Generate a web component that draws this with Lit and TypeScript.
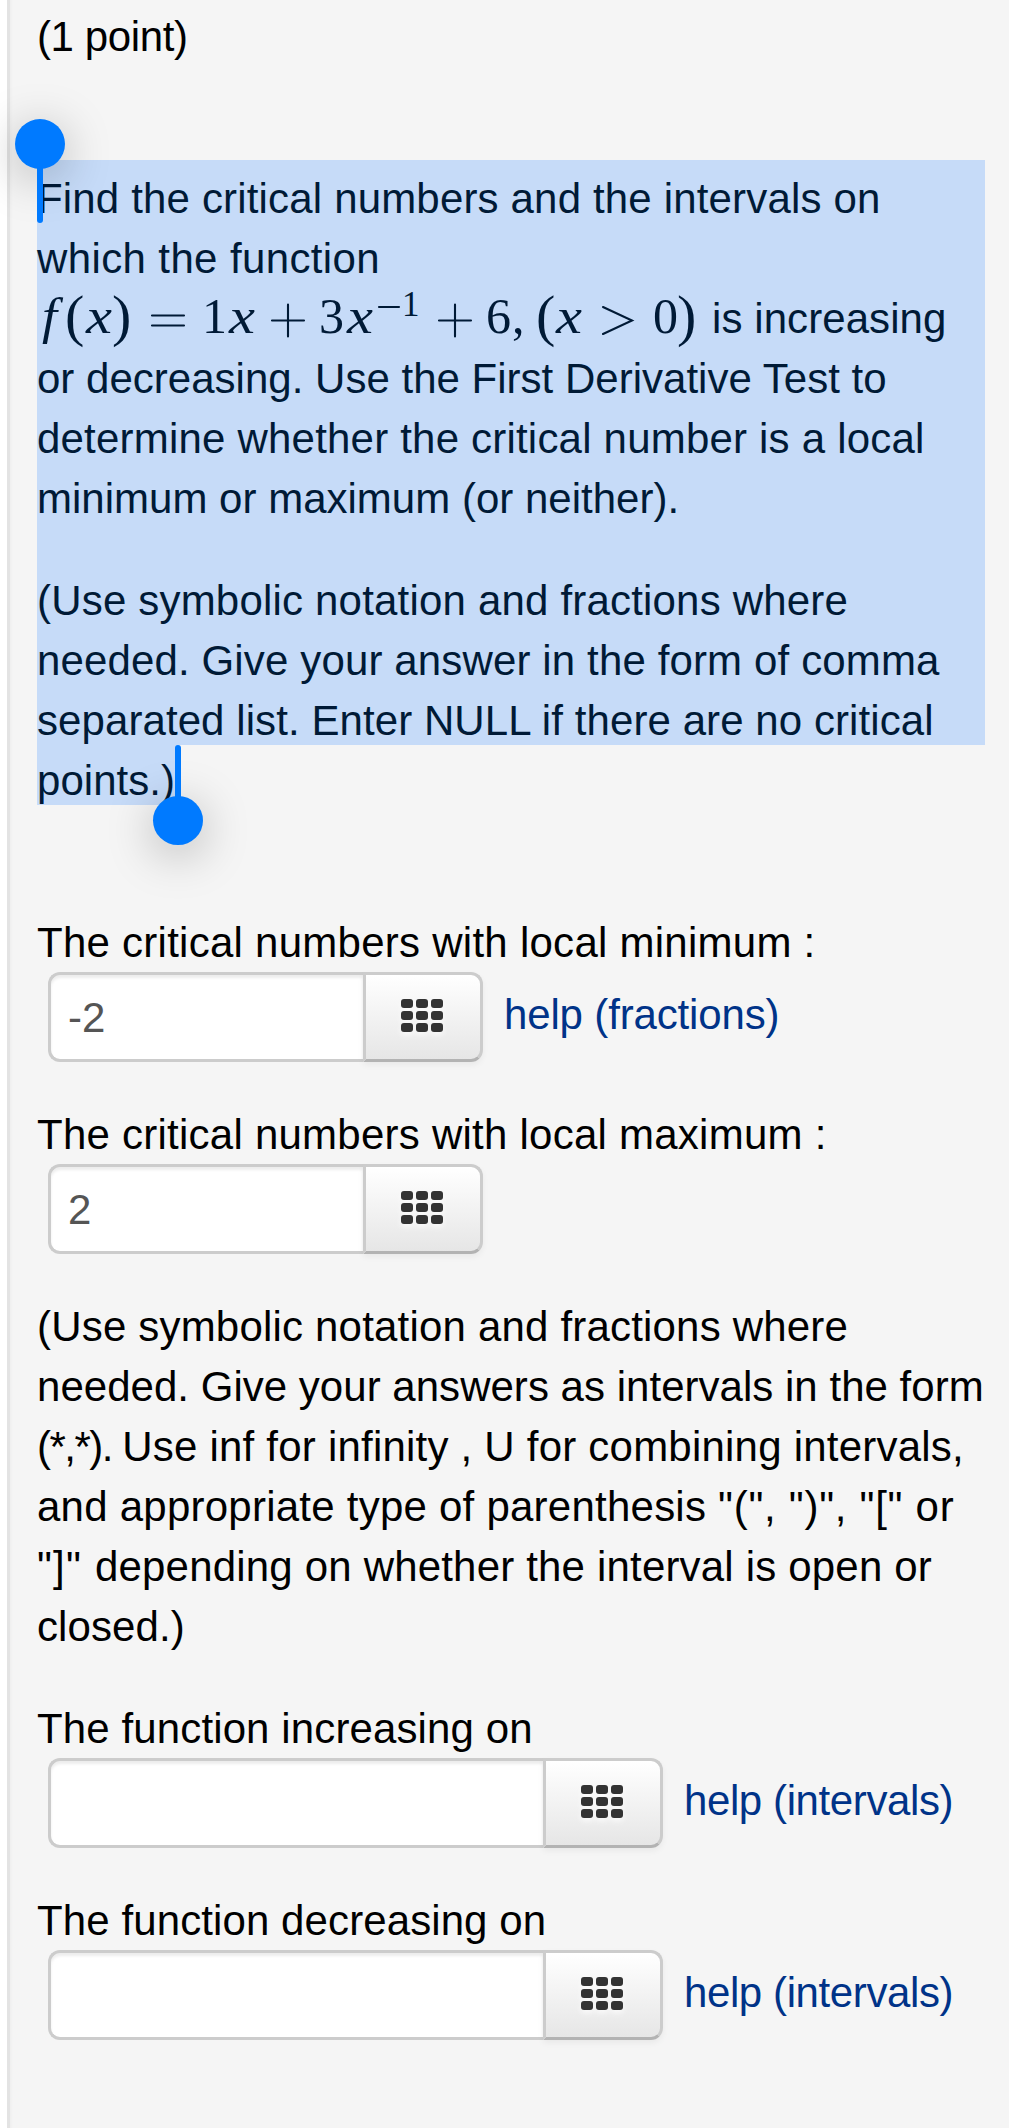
import { LitElement, html, css, svg } from "lit";
import { customElement, property } from "lit/decorators.js";
import { styleMap } from "lit/directives/style-map.js";

/** Runs of one line of text, each followed by its tracking in pixels. */
type Run = [text: string, tracking: number];
type Line = Run[];

const track = (px: number) => styleMap({ letterSpacing: `${px}px` });
const line = (runs: Line) =>
  html`<span class="line">${runs.map(([text, px]) => html`<span style=${track(px)}>${text}</span>`)}</span>`;

const INTRO: Line[] = [
  [["Find the critical numbers and the intervals on", 0.169]],
  [["which the function", 0.38]],
];
const TASK: Line[] = [
  [["or decreasing. Use the First Derivative Test to", 0.015]],
  [["determine whether the critical number is a local", 0.204]],
  [["minimum or maximum (or neither).", 0.01]],
];
const NOTATION: Line[] = [
  [["(Use symbolic notation and fractions where", 0.19]],
  [["needed. Give your answer in the form of comma", 0.135]],
  [["separated list. Enter NULL if there are no critical", 0.08]],
  [["points.)", 0.037]],
];
const INTERVALS: Line[] = [
  [["(Use symbolic notation and fractions where", 0.19]],
  [["needed. Give your answers as intervals in the form", 0.025]],
  [["(*,*). ", -1.5], ["Use inf for infinity , U for combining intervals,", 0.22]],
  [["and appropriate type of parenthesis ", 0.24], ['"(", ")", "[" or', 0.72]],
  [['"]" ', 1.2], ["depending on whether the interval is open or", 0.185]],
  [["closed.)", 0.1]],
];

@customElement("math-formula")
class MathFormula extends LitElement {
  static styles = css`
    :host { display: block; width: 675px; height: 60px; flex: none; }
    svg { display: block; overflow: visible; }
    text { font-family: "Liberation Serif", serif; font-size: 50px; fill: #001a36; }
    .it { font-style: italic; }
    .par { font-size: 58px; }
    .sup { font-size: 35px; }
    .op { fill: none; stroke: #001a36; stroke-width: 2.1; stroke-linecap: round; }
  `;
  render() {
    const t = (s: string, x: number, cls = "", y = 45) => svg`<text class=${cls} x=${x} y=${y}>${s}</text>`;
    const wide = (s: string, x: number, w: number) =>
      svg`<text class="it" x=${x} y="45" textLength=${w} lengthAdjust="spacingAndGlyphs">${s}</text>`;
    return html`<svg width="675" height="60" viewBox="37 0 675 60" role="img" aria-label="f(x) = 1x + 3x^-1 + 6, (x > 0)">
      ${wide("f", 42, 15)}${t("(", 65, "par", 47)}${wide("x", 86, 26)}${t(")", 112, "par", 47)}
      <path class="op" d="M152 27.5H184M152 37.5H184" />
      ${t("1", 202)}${wide("x", 229, 26)}
      <path class="op" d="M272 32.5H304M288 16.5V48.5" />
      ${t("3", 319)}${wide("x", 347, 26)}
      <path class="op" d="M379 19H399" />
      ${t("1", 402, "sup", 28)}
      <path class="op" d="M439 32.5H471M455 16.5V48.5" />
      ${t("6", 486)}${t(",", 512)}${t("(", 536, "par", 47)}${wide("x", 556, 26)}
      <path class="op" d="M603 19L632 32.5L603 46" />
      ${t("0", 653)}${t(")", 677, "par", 47)}
    </svg>`;
  }
}

@customElement("answer-field")
class AnswerField extends LitElement {
  @property() value = "";
  @property() help = "";
  @property({ type: Number }) helpTracking = 0;
  @property({ type: Number }) fieldWidth = 315;

  static styles = css`
    :host { display: flex; align-items: flex-start; height: 90px; padding-left: 11px; }
    .input {
      box-sizing: border-box; height: 90px; padding: 13px 17px;
      border: 3px solid #ccc; border-right: 0; border-radius: 12px 0 0 12px;
      background: #fff; color: #555; line-height: 60px;
      box-shadow: inset 0 3px 3px rgba(0, 0, 0, 0.075);
    }
    .key {
      box-sizing: border-box; width: 120px; height: 90px;
      display: flex; justify-content: center; padding: 24px 2px 0 0;
      border: 3px solid #ccc; border-bottom-color: #b3b3b3; border-radius: 0 12px 12px 0;
      background: linear-gradient(#fff, #e6e6e6);
      box-shadow: inset 0 3px 0 rgba(255, 255, 255, 0.2), 0 3px 6px rgba(0, 0, 0, 0.05);
    }
    .grid { width: 42px; height: 33px; fill: #333; filter: drop-shadow(0 3px 3px rgba(255, 255, 255, 0.75)); }
    .help { margin: 13px 0 0 21px; color: #038; line-height: 60px; white-space: pre; text-decoration: none; }
  `;
  render() {
    return html`
      <div class="input" style=${styleMap({ width: `${this.fieldWidth}px` })}>${this.value}</div>
      <div class="key">
        <svg class="grid" viewBox="0 0 42 33">
          ${[0, 12, 24].map((y) => [0, 15, 30].map((x) => svg`<rect x=${x} y=${y} width="12" height="9" rx="3" />`))}
        </svg>
      </div>
      ${this.help ? html`<a class="help" style=${track(this.helpTracking)}>${this.help}</a>` : ""}
    `;
  }
}

@customElement("app-root")
class AppRoot extends LitElement {
  static styles = css`
    :host {
      display: flex; height: 2128px; background: #fff; color: #000; overflow: hidden;
      font: 42px/60px "Liberation Sans", Arial, sans-serif;
    }
    .panel {
      box-sizing: border-box; width: 1002px; margin-left: 7px; padding: 6px 0 0 27px;
      border-left: 3px solid #e3e3e3;
      background: linear-gradient(to right, #efefef, #f5f5f5 3px);
    }
    .line { display: block; box-sizing: border-box; height: 60px; padding-top: 1px; white-space: pre; }
    .selected {
      position: relative; box-sizing: border-box; width: 948px; height: 645px;
      margin: 94px 0 107px; padding-top: 8px; color: #001a36;
      background:
        linear-gradient(#c6dbf8, #c6dbf8) 0 0 / 948px 585px no-repeat,
        linear-gradient(#c6dbf8, #c6dbf8) 0 0 / 141px 645px no-repeat;
    }
    .block { margin-bottom: 42px; }
    .formula { display: flex; height: 60px; }
    .handle { position: absolute; width: 50px; height: 50px; border-radius: 50%; background: #007aff; box-shadow: 0 9px 48px rgba(0, 0, 0, 0.28); }
    .stem { position: absolute; width: 6px; background: #007aff; }
    .handle.start { left: -22px; top: -41px; }
    .stem.start { left: 0; top: 5px; height: 58px; border-radius: 0 0 3px 3px; }
    .handle.end { left: 116px; top: 636px; height: 49px; }
    .stem.end { left: 138px; top: 585px; height: 60px; border-radius: 3px 3px 0 0; }
  `;
  render() {
    return html`<main class="panel">
      ${line([["(1 point)", -0.386]])}
      <section class="selected">
        <div class="block">
          ${INTRO.map(line)}
          <div class="formula"><math-formula></math-formula>${line([["is increasing", 0.076]])}</div>
          ${TASK.map(line)}
        </div>
        ${NOTATION.map(line)}
        <i class="handle start"></i><i class="stem start"></i>
        <i class="handle end"></i><i class="stem end"></i>
      </section>
      <div class="block">
        ${line([["The critical numbers with local minimum :", 0.26]])}
        <answer-field value="-2" help="help (fractions)" .helpTracking=${-0.153}></answer-field>
      </div>
      <div class="block">
        ${line([["The critical numbers with local maximum :", 0.245]])}
        <answer-field value="2"></answer-field>
      </div>
      <div class="block">${INTERVALS.map(line)}</div>
      <div class="block">
        ${line([["The function increasing on", 0.12]])}
        <answer-field .fieldWidth=${495} help="help (intervals)" .helpTracking=${-0.397}></answer-field>
      </div>
      <div class="block">
        ${line([["The function decreasing on", 0.1]])}
        <answer-field .fieldWidth=${495} help="help (intervals)" .helpTracking=${-0.397}></answer-field>
      </div>
    </main>`;
  }
}
